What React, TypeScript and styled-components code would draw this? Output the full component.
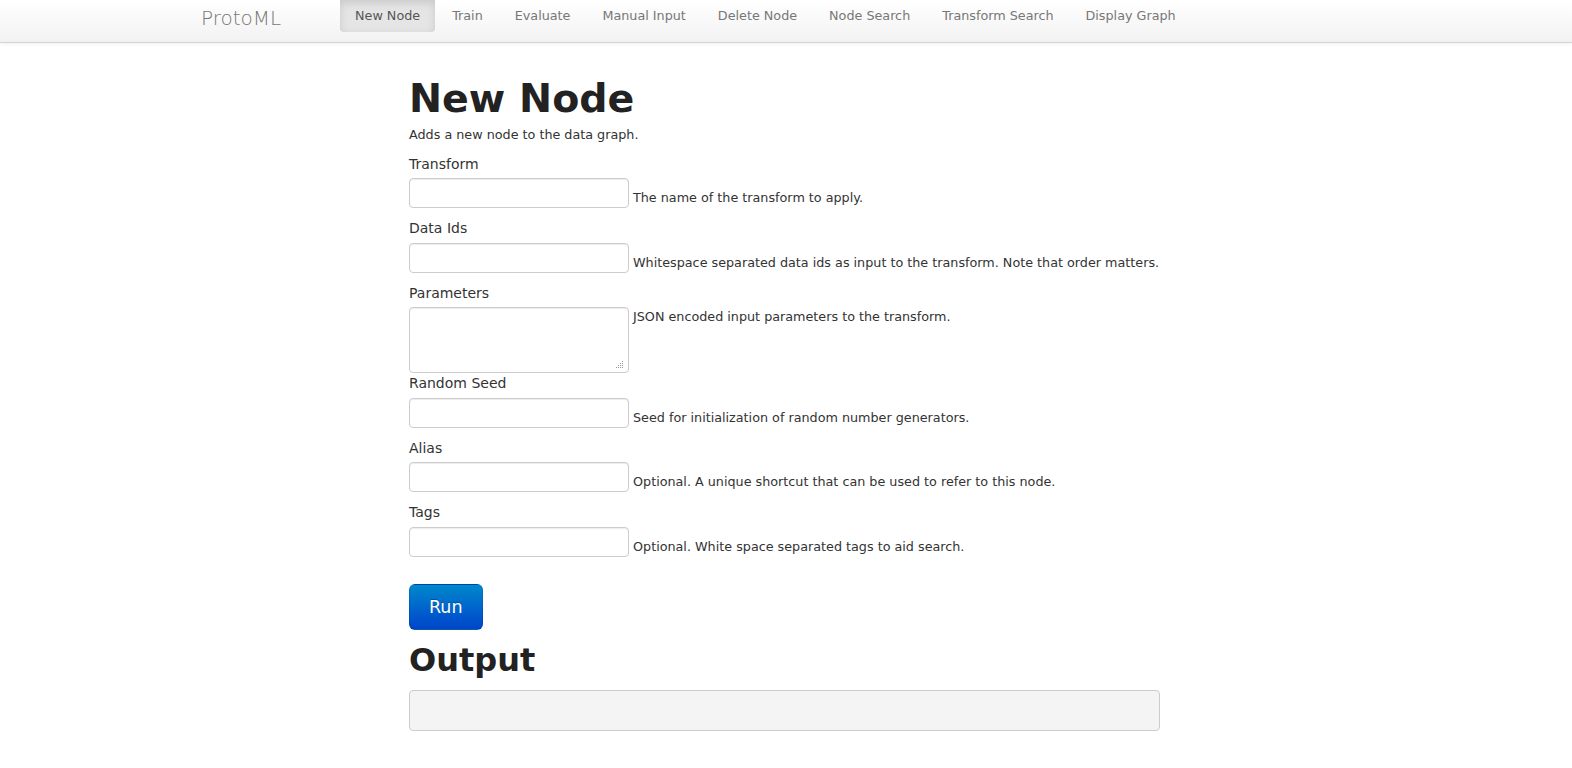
import React from "react";
import styled, { createGlobalStyle } from "styled-components";

const GlobalStyle = createGlobalStyle`
  html, body {
    margin: 0;
    padding: 0;
    background: #ffffff;
  }
  body {
    font-family: "DejaVu Sans", "Liberation Sans", sans-serif;
    font-size: 14px;
    line-height: 20px;
    color: #333333;
  }
`;

const Navbar = styled.header`
  height: 42px;
  background: linear-gradient(to bottom, #ffffff, #f2f2f2);
  border-bottom: 1px solid #d4d4d4;
  box-shadow: 0 1px 4px rgba(0, 0, 0, 0.065);
`;

const NavInner = styled.div`
  width: 1170px;
  margin: 0 auto;
  display: flex;
  align-items: flex-start;
`;

const Brand = styled.a`
  font-size: 20px;
  font-weight: 200;
  color: #777777;
  line-height: 36px;
  text-decoration: none;
  width: 139px;
`;

const NavList = styled.ul`
  list-style: none;
  margin: 0;
  padding: 0;
  display: flex;
  gap: 2px;
`;

const NavLink = styled.a<{ active?: boolean }>`
  display: block;
  height: 32px;
  line-height: 32px;
  padding: 0 15px;
  font-size: 12.75px;
  text-decoration: none;
  border-radius: 0 0 4px 4px;
  background: ${({ active }) => (active ? "#e5e5e5" : "transparent")};
  box-shadow: ${({ active }) =>
    active ? "inset 0 3px 8px rgba(0, 0, 0, 0.125)" : "none"};
  color: ${({ active }) => (active ? "#555555" : "#777777")};
`;

const Container = styled.main`
  width: 1170px;
  margin: 0 auto;
`;

const Column = styled.div`
  margin-left: 208px;
  width: 751px;
  padding-top: 33px;
`;

const Title = styled.h1`
  margin: 0 0 5px;
  font-size: 39.5px;
  line-height: 44px;
  font-weight: bold;
  color: #222222;
`;

const SubTitle = styled.h2`
  margin: 10px 0 10px;
  font-size: 32px;
  line-height: 40px;
  font-weight: bold;
  color: #222222;
`;

const Lead = styled.p`
  margin: 0 0 8.5px;
  font-size: 12.75px;
  line-height: 20px;
`;

const Group = styled.div<{ gap: number }>`
  margin-bottom: ${({ gap }) => gap}px;
`;

const Label = styled.label`
  display: block;
  font-size: 14px;
  line-height: 20px;
  margin-bottom: 4.5px;
`;

const Row = styled.div<{ top?: boolean }>`
  display: flex;
  align-items: ${({ top }) => (top ? "flex-start" : "flex-end")};
  gap: 4px;
`;

const TextInput = styled.input`
  box-sizing: border-box;
  flex: none;
  width: 220px;
  height: 30px;
  padding: 4px 6px;
  border: 1px solid #cccccc;
  border-radius: 4px;
  box-shadow: inset 0 1px 1px rgba(0, 0, 0, 0.075);
  font-family: inherit;
  font-size: 14px;
`;

const AreaWrap = styled.div`
  position: relative;
  flex: none;
  width: 220px;
  height: 66px;
`;

const TextArea = styled.textarea`
  box-sizing: border-box;
  width: 220px;
  height: 66px;
  padding: 4px 6px;
  border: 1px solid #cccccc;
  border-radius: 4px;
  box-shadow: inset 0 1px 1px rgba(0, 0, 0, 0.075);
  font-family: inherit;
  font-size: 14px;
  display: block;
  resize: none;
`;

const Grip = styled.svg`
  position: absolute;
  right: 6px;
  bottom: 5px;
  pointer-events: none;
`;

const Help = styled.span`
  font-size: 12.75px;
  line-height: 20px;
  white-space: nowrap;
  color: #333333;
`;

const RunButton = styled.button`
  margin-top: 27px;
  display: block;
  padding: 11px 19px;
  font-family: inherit;
  font-size: 17.5px;
  line-height: 22px;
  color: #ffffff;
  text-shadow: 0 -1px 0 rgba(0, 0, 0, 0.25);
  background: linear-gradient(to bottom, #0088cc, #0044cc);
  border: 1px solid rgba(0, 0, 0, 0.1);
  border-bottom-color: rgba(0, 0, 0, 0.25);
  border-radius: 6px;
  cursor: pointer;
`;

const Output = styled.pre`
  box-sizing: border-box;
  margin: 0;
  height: 41px;
  padding: 9.5px;
  background: #f4f4f4;
  border: 1px solid #cccccc;
  border-radius: 4px;
  font-size: 13px;
  line-height: 20px;
`;

const links = [
  "New Node",
  "Train",
  "Evaluate",
  "Manual Input",
  "Delete Node",
  "Node Search",
  "Transform Search",
  "Display Graph",
];

const fields = [
  { label: "Transform", help: "The name of the transform to apply." },
  {
    label: "Data Ids",
    help: "Whitespace separated data ids as input to the transform. Note that order matters.",
  },
  { label: "Parameters", help: "JSON encoded input parameters to the transform.", area: true },
  { label: "Random Seed", help: "Seed for initialization of random number generators." },
  { label: "Alias", help: "Optional. A unique shortcut that can be used to refer to this node." },
  { label: "Tags", help: "Optional. White space separated tags to aid search." },
];

// dotted resize grip like the one in the reference
const gripDots = [
  [6, 0],
  [6, 2],
  [4, 2],
  [6, 4],
  [4, 4],
  [2, 4],
  [6, 6],
  [4, 6],
  [2, 6],
  [0, 6],
];

export default function App() {
  return (
    <>
      <GlobalStyle />
      <Navbar>
        <NavInner>
          <Brand href="#">ProtoML</Brand>
          <NavList>
            {links.map((l, i) => (
              <li key={l}>
                <NavLink href="#" active={i === 0}>
                  {l}
                </NavLink>
              </li>
            ))}
          </NavList>
        </NavInner>
      </Navbar>
      <Container>
        <Column>
          <Title>New Node</Title>
          <Lead>Adds a new node to the data graph.</Lead>
          {fields.map((f, i) => (
            <Group key={f.label} gap={f.area || i === fields.length - 1 ? 0 : 10}>
              <Label>{f.label}</Label>
              <Row top={f.area}>
                {f.area ? (
                  <AreaWrap>
                    <TextArea />
                    <Grip width="7" height="7" viewBox="0 0 7 7">
                      {gripDots.map(([x, y]) => (
                        <rect key={`${x}-${y}`} x={x} y={y} width="1" height="1" fill="#9a9a9a" />
                      ))}
                    </Grip>
                  </AreaWrap>
                ) : (
                  <TextInput type="text" />
                )}
                <Help>{f.help}</Help>
              </Row>
            </Group>
          ))}
          <RunButton>Run</RunButton>
          <SubTitle>Output</SubTitle>
          <Output />
        </Column>
      </Container>
    </>
  );
}
